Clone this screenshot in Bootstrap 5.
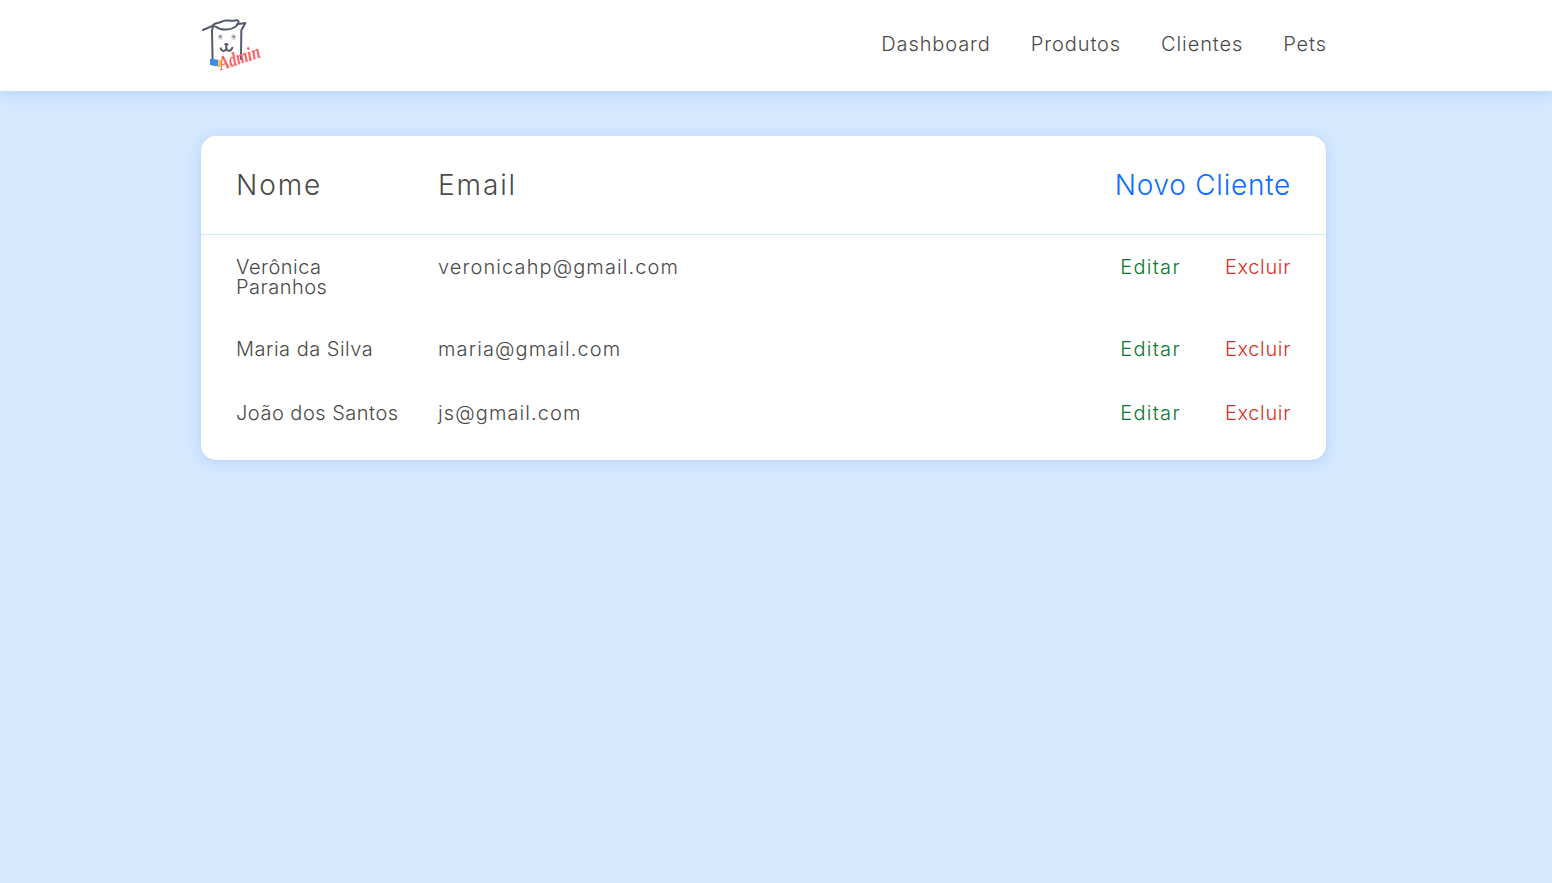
<!DOCTYPE html>
<html lang="en">
<head>
  <meta charset="UTF-8">
  <title>Clientes</title>
  <meta name="viewport" content="width=device-width, initial-scale=1">
  <link href="https://cdn.jsdelivr.net/npm/bootstrap@5.3.3/dist/css/bootstrap.min.css" rel="stylesheet">
  <style>
    body {
      background: #d4e8fe;
      font-family: Inter, "Open Sans", sans-serif;
      font-weight: 300;
      color: #4a4a4a;
      min-height: 883px;
    }
    .top-bar {
      background: #fff;
      height: 91px;
      padding: 0;
      box-shadow: 0 2px 12px rgba(120, 170, 240, .35);
    }
    .page-wrap {
      width: 1125px;
      margin-left: 201px;
    }
    .logo-box {
      width: 70px;
      height: 55px;
      margin-top: -1px;
    }
    .logo-word {
      font-family: "Liberation Serif", serif;
      font-style: italic;
      font-weight: 700;
      font-size: 46px;
      fill: #f8615f;
    }
    .menu-row {
      gap: 40px;
      margin-right: -1px;
    }
    .menu-link {
      color: #4a4a4a;
      font-size: 20px;
      letter-spacing: .9px;
      line-height: 24px;
      text-decoration: none;
      margin-top: -4px;
    }
    .client-card {
      margin-top: 45px;
      background: #fff;
      border-radius: 15px;
      box-shadow: 0 2px 12px rgba(120, 170, 240, .35);
      height: 324px;
      overflow: hidden;
    }
    .client-table {
      width: 100%;
      table-layout: fixed;
      border-collapse: collapse;
    }
    .client-table th {
      font-weight: 300;
      font-size: 28px;
      letter-spacing: 1.9px;
      line-height: 34px;
      padding: 32px 0;
      border-bottom: 1px solid #d4e8fe;
      white-space: nowrap;
    }
    .client-table td {
      font-size: 20px;
      letter-spacing: 1.1px;
      line-height: 20px;
      padding: 22px 0;
      vertical-align: top;
    }
    .client-table tr.tall-row td {
      padding-bottom: 20px;
    }
    .client-table .col-name { width: 237px; padding-left: 35px; padding-right: 20px; letter-spacing: .5px; }
    .client-table .col-actions { width: 260px; padding-right: 35px; text-align: right; }
    .client-table th.col-name { letter-spacing: 1.9px; }
    .act-link {
      text-decoration: none;
    }
    .act-edit { color: #0a7a2a; margin-right: 44px; letter-spacing: 1.3px; }
    .act-del { color: #d93025; letter-spacing: .65px; }
    .new-link {
      color: #0d6efd;
      text-decoration: none;
      letter-spacing: .75px;
    }
  </style>
</head>
<body>

<nav class="navbar top-bar">
  <div class="page-wrap d-flex justify-content-between align-items-center">
    <a href="#" class="d-block logo-box">
      <svg class="d-block" viewBox="30 33 210 180" width="70" height="60" xmlns="http://www.w3.org/2000/svg">
        <g fill="none" stroke="#555a6e" stroke-width="6" stroke-linecap="round" stroke-linejoin="round">
          <path d="M36 69 L66 56 L63 72 L65 172 L88 176"/>
          <path d="M66 56 C68 46 84 50 92 44 C104 34 118 46 134 40 C146 38 144 50 138 54 C126 70 90 72 76 60 C72 58 68 58 66 56"/>
          <path d="M138 52 L163 48 L151 70 L150 156"/>
          <path d="M89 124 C92 134 102 134 106 126 C110 134 120 134 124 122"/>
          <path d="M106 116 L106 126"/>
        </g>
        <ellipse cx="88" cy="90" rx="8" ry="9" fill="#d9dbe0"/>
        <ellipse cx="128" cy="90" rx="8" ry="9" fill="#d9dbe0"/>
        <circle cx="88" cy="89" r="3.5" fill="#777b8a"/>
        <circle cx="128" cy="89" r="3.5" fill="#777b8a"/>
        <ellipse cx="106" cy="112" rx="6" ry="4" fill="#555a6e"/>
        <path d="M57 155 L82 158 L80 178 L57 174 Z" fill="#3d8be8"/>
        <path d="M82 158 L94 160 L90 180 L80 178 Z" fill="#f4c84c"/>
        <text class="logo-word" transform="translate(90 190) rotate(-18) scale(1 1.3)">Admin</text>
      </svg>
    </a>
    <div class="d-flex menu-row">
      <a href="#" class="menu-link">Dashboard</a>
      <a href="#" class="menu-link">Produtos</a>
      <a href="#" class="menu-link">Clientes</a>
      <a href="#" class="menu-link">Pets</a>
    </div>
  </div>
</nav>

<main class="page-wrap client-card">
  <table class="client-table">
    <thead>
      <tr>
        <th class="col-name">Nome</th>
        <th>Email</th>
        <th class="col-actions"><a href="#" class="new-link">Novo Cliente</a></th>
      </tr>
    </thead>
    <tbody>
      <tr class="tall-row">
        <td class="col-name">Verônica Paranhos</td>
        <td>veronicahp@gmail.com</td>
        <td class="col-actions"><a href="#" class="act-link act-edit">Editar</a><a href="#" class="act-link act-del">Excluir</a></td>
      </tr>
      <tr>
        <td class="col-name">Maria da Silva</td>
        <td>maria@gmail.com</td>
        <td class="col-actions"><a href="#" class="act-link act-edit">Editar</a><a href="#" class="act-link act-del">Excluir</a></td>
      </tr>
      <tr>
        <td class="col-name">João dos Santos</td>
        <td>js@gmail.com</td>
        <td class="col-actions"><a href="#" class="act-link act-edit">Editar</a><a href="#" class="act-link act-del">Excluir</a></td>
      </tr>
    </tbody>
  </table>
</main>

<script src="https://cdn.jsdelivr.net/npm/bootstrap@5.3.3/dist/js/bootstrap.bundle.min.js"></script>
</body>
</html>
